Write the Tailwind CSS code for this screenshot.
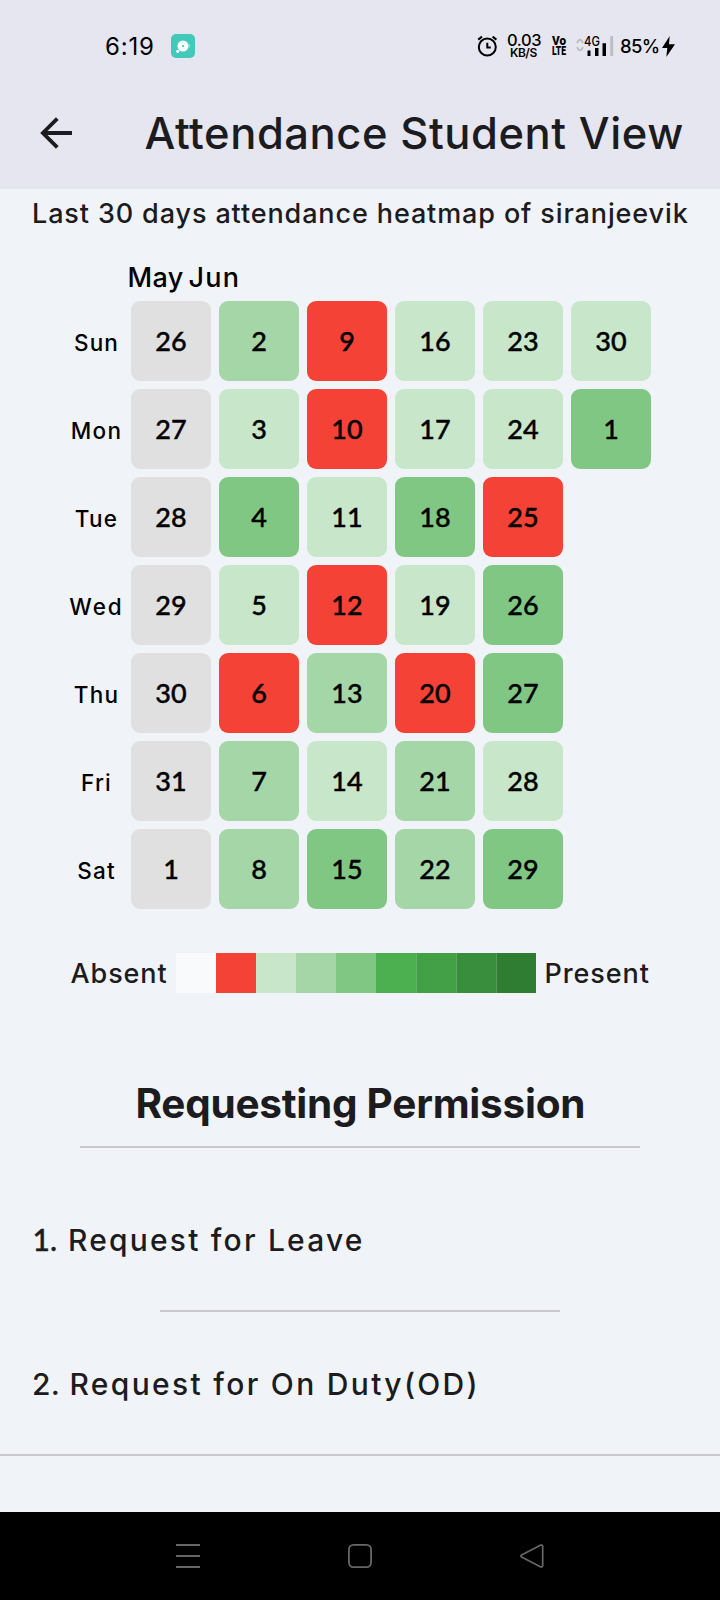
<!DOCTYPE html>
<html lang="en">
<head>
<meta charset="utf-8">
<title>Attendance Student View</title>
<script src="https://cdn.jsdelivr.net/npm/@tailwindcss/browser@4"></script>
</head>
<body class="w-[720px] h-[1600px] overflow-hidden bg-[#f0f4f9] text-[#1c1b20] font-['Inter',sans-serif] font-medium flex flex-col whitespace-nowrap">

<header class="h-[189px] shrink-0 bg-[#e6e6f0]">
  <!-- status bar -->
  <div class="h-[92px] flex items-center text-black">
    <span class="ml-[105px] w-[66px] pt-px text-[24px] leading-8 tracking-[0.8px] font-normal">6:19</span>
    <svg class="size-6" viewBox="0 0 24 24"><rect width="24" height="24" rx="5" fill="#42c9b9"/><path d="M18 9a4 4 0 0 1 0 5.500z" fill="#8fdfd6"/><circle cx="12" cy="12" r="5.500" fill="#fff"/><circle cx="12" cy="12" r="1.100" fill="#42c9b9"/><circle cx="6.700" cy="17.300" r="1.600" fill="#fff"/></svg>
    <svg class="ml-[282px] w-[21px] h-[22px]" viewBox="0 0 21 22" fill="none" stroke="#000" stroke-width="2"><circle cx="10.300" cy="12" r="8.500"/><path d="M1.200 4.600 5 1.600M15.600 1.600l3.800 3M10.300 7.800v4.700h3.500"/></svg>
    <div class="ml-[9px] w-[42px] flex flex-col items-start">
      <span class="text-[16.500px] leading-[13px] tracking-[-0.400px]">0.03</span>
      <span class="ml-[3px] text-[12px] leading-[12px] tracking-[-0.500px] font-semibold">KB/S</span>
    </div>
    <div class="ml-[3px] w-[17px] flex flex-col items-start font-['Roboto',sans-serif] font-black text-[13px] leading-[10.500px]">
      <span class="origin-left scale-x-[0.9]">Vo</span>
      <span class="origin-left scale-x-[0.660]">LTE</span>
    </div>
    <div class="relative ml-[7px] w-[40px] h-6">
      <svg class="w-[40px] h-6" viewBox="0 0 40 24"><path d="M1 9Q4 2.500 7 9M1 13Q4 19.500 7 13" fill="none" stroke="#bdbdc6" stroke-width="1.800"/><path d="M11.500 16.500h3V22h-3zM19 14h3.500v8H19zM26.500 9.300H30V22h-3.500z"/><path d="M34.200 2h3v20h-3z" fill="#bdbdc6"/></svg>
      <span class="absolute left-[7.500px] top-[1px] origin-left scale-x-[0.870] text-[13px] leading-[12px]">4G</span>
    </div>
    <span class="ml-[4px] w-[42px] text-[18.500px] leading-6 tracking-[-0.700px]">85%</span>
    <svg class="w-[13px] h-[21px]" viewBox="0 0 13 21"><path d="M7.700 0 0 12h5.300L4.300 21 13 8.300H7z"/></svg>
  </div>
  <!-- app bar -->
  <div class="h-[82px] flex items-center">
    <svg class="ml-[40px] w-[32px] h-[32px]" viewBox="0 0 32 32" fill="none" stroke="#1c1b20" stroke-width="3.800"><path d="M32 16H3M17.300 1.600 2.900 16l14.400 14.400"/></svg>
    <h1 class="ml-[72.500px] text-[43.500px] leading-[56px] tracking-[0.560px]">Attendance Student View</h1>
  </div>
</header>

<main class="flex-1 flex flex-col">
  <p class="h-[49px] leading-[49px] pl-[32px] text-[27px] tracking-[0.880px]">Last 30 days attendance heatmap of siranjeevik</p>

  <div class="mt-[24px] h-[31px] leading-8 pl-[127.500px] flex text-[27px] text-black">
    <span class="w-[61px] tracking-[0.300px]">May</span><span class="tracking-[1.300px]">Jun</span>
  </div>

  <section id="heat" class="mt-2 ml-[69px] grid grid-cols-[54px_repeat(6,80px)] auto-rows-[80px] gap-2 text-black"></section>

  <div class="mt-[44px] h-10 flex items-center text-[27px]">
    <span class="ml-[70.500px] w-[105px] leading-10 pt-px tracking-[0.900px]">Absent</span>
    <div class="flex w-[360px] h-10">
      <i class="w-10 bg-[#f8fafc]"></i><i class="w-10 bg-[#f44336]"></i><i class="w-10 bg-[#c8e6c9]"></i><i class="w-10 bg-[#a5d6a7]"></i><i class="w-10 bg-[#81c784]"></i><i class="w-10 bg-[#4caf50]"></i><i class="w-10 bg-[#43a047] border-l border-[#62b266]"></i><i class="w-10 bg-[#388e3c] border-l border-[#5ca860]"></i><i class="w-10 bg-[#2e7d32] border-l border-[#559a59]"></i>
    </div>
    <span class="ml-[9px] leading-10 pt-px tracking-[0.900px]">Present</span>
  </div>

  <h2 class="mt-[81px] h-[60px] leading-[60px] pl-[135.500px] text-[40.500px] font-bold tracking-[-0.260px]">Requesting Permission</h2>
  <div class="mt-3 ml-[80px] w-[560px] h-0.5 bg-[#cac6ce]"></div>
  <p class="mt-[72px] h-10 leading-10 pl-[32.500px] flex text-[30px] tracking-[2.200px]"><span class="w-[35.500px] -mt-px tracking-[0.200px] font-['Lato'] [-webkit-text-stroke:0.4px_currentColor]">1.</span>Request for Leave</p>
  <div class="mt-[50px] ml-[160px] w-[400px] h-0.5 bg-[#cac6ce]"></div>
  <p class="mt-[52px] h-10 leading-10 pl-[32px] flex text-[30px] tracking-[2.320px]"><span class="w-[37.500px] tracking-[0.200px]">2.</span>Request for On Duty(OD)</p>
  <div class="mt-[50px] h-0.5 bg-[#cac6ce]"></div>
</main>

<nav class="h-[88px] shrink-0 bg-black flex items-center pl-[176px]">
  <svg class="size-6" viewBox="0 0 24 24" fill="#666"><path d="M0 0h24v2H0zM0 11h24v2H0zM0 22h24v2H0z"/></svg>
  <svg class="ml-[148px] size-6" viewBox="0 0 24 24" fill="none" stroke="#666" stroke-width="1.800"><rect x=".9" y=".9" width="22.200" height="22.200" rx="4.500"/></svg>
  <svg class="ml-[148px] size-6" viewBox="0 0 24 24" fill="none" stroke="#666" stroke-width="1.700" stroke-linejoin="round"><path d="M1.600 10.900 20.300 1.300Q22.500.5 22.700 2.300V21.700Q22.500 23.500 20.300 22.700L1.600 13.100Q.2 12 1.600 10.900Z"/></svg>
</nav>

<script>
const tone = {
  n: 'bg-[#e0e0e0]', r: 'bg-[#f44336]', a: 'bg-[#c8e6c9]', b: 'bg-[#a5d6a7]', c: 'bg-[#81c784]', x: 'invisible'
};
const rows = [
  ['Sun', '26n 2b 9r 16a 23a 30a'],
  ['Mon', '27n 3a 10r 17a 24a 1c'],
  ['Tue', '28n 4c 11a 18c 25r x'],
  ['Wed', '29n 5a 12r 19a 26c x'],
  ['Thu', '30n 6r 13b 20r 27c x'],
  ['Fri', '31n 7b 14a 21b 28a x'],
  ['Sat', '1n 8b 15c 22b 29c x']
];
document.getElementById('heat').innerHTML = rows.map(([day, cells]) =>
  `<div class="flex items-center justify-center pt-1 text-[22.5px] ${day === 'Wed' ? 'tracking-[2px]' : 'tracking-[1.2px]'}"><span class="-mr-px">${day}</span></div>` +
  cells.split(' ').map(c =>
    `<div class="rounded-[9px] flex items-center justify-center pt-px font-['Lato'] text-[27px] [-webkit-text-stroke:0.4px_black] ${tone[c.slice(-1)]}">${c.slice(0, -1)}</div>`
  ).join('')
).join('');
</script>
</body>
</html>
